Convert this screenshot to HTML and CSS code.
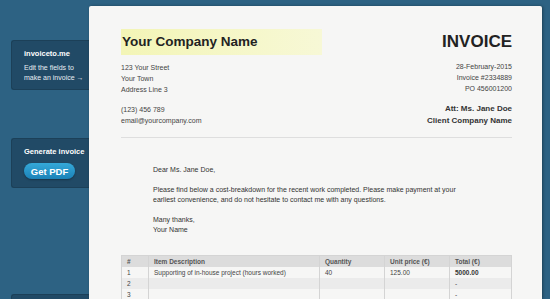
FILE: index.html
```html
<!DOCTYPE html>
<html lang="en">
<head>
    <meta charset="UTF-8">
    <title>invoiceto.me</title>
    <link rel="stylesheet" href="styles.css">
</head>
<body>
    <div class="layout">
        <div class="sidebar">
            <div class="side-box intro">
                <div class="brand">invoiceto.me</div>
                <p>Edit the fields to<br>make an invoice &rarr;</p>
            </div>
            <div class="side-box generate">
                <div class="brand">Generate invoice</div>
                <button class="pdf-btn">Get PDF</button>
            </div>
            <div class="side-box more"></div>
        </div>

        <div class="paper">
            <div class="head">
                <div class="from">
                    <div class="company">Your Company Name</div>
                    <p>123 Your Street<br>Your Town<br>Address Line 3</p>
                    <p>(123) 456 789<br>email@yourcompany.com</p>
                </div>
                <div class="meta">
                    <h1>INVOICE</h1>
                    <p>28-February-2015<br>Invoice #2334889<br>PO 456001200</p>
                    <p class="client">Att: Ms. Jane Doe<br>Client Company Name</p>
                </div>
            </div>

            <hr class="rule">

            <div class="letter">
                <p>Dear Ms. Jane Doe,</p>
                <p>Please find below a cost-breakdown for the recent work completed. Please make payment at your<br>earliest convenience, and do not hesitate to contact me with any questions.</p>
                <p>Many thanks,<br>Your Name</p>
            </div>

            <table class="items">
                <thead>
                    <tr>
                        <th class="c-num">#</th>
                        <th class="c-desc">Item Description</th>
                        <th class="c-qty">Quantity</th>
                        <th class="c-price">Unit price (&euro;)</th>
                        <th>Total (&euro;)</th>
                    </tr>
                </thead>
                <tbody>
                    <tr>
                        <td>1</td>
                        <td>Supporting of in-house project (hours worked)</td>
                        <td>40</td>
                        <td>125.00</td>
                        <td class="total">5000.00</td>
                    </tr>
                    <tr>
                        <td>2</td><td></td><td></td><td></td><td>-</td>
                    </tr>
                    <tr>
                        <td>3</td><td></td><td></td><td></td><td>-</td>
                    </tr>
                </tbody>
            </table>
        </div>
    </div>
</body>
</html>
```

FILE: styles.css
```css
* {
    margin: 0;
    padding: 0;
    box-sizing: border-box;
}

body {
    font-family: 'Liberation Sans', Arial, sans-serif;
    background: #2d6283;
    color: #333;
    overflow: hidden;
}

.layout {
    display: flex;
    height: 299px;
    overflow: hidden;
}

/* left column */
.sidebar {
    width: 89px;
    padding: 40px 0 0 11px;
    display: flex;
    flex-direction: column;
    gap: 48px;
    flex-shrink: 0;
}

.side-box {
    background: #214a66;
    border: 1px solid #1c4058;
    border-right: none;
    border-radius: 3px 0 0 3px;
    height: 50px;
    padding: 8px 0 0 12px;
    color: #fff;
    flex-shrink: 0;
}

.side-box.more {
    margin-top: 58px;
}

.brand {
    font-size: 7.5px;
    font-weight: bold;
    line-height: 10px;
}

.side-box p {
    font-size: 7px;
    line-height: 10px;
    margin-top: 4px;
    color: #e8eef3;
}

.pdf-btn {
    display: block;
    margin-top: 6px;
    width: 51px;
    height: 16px;
    border: none;
    border-radius: 8px;
    background: linear-gradient(#35a9d9, #1b82b8);
    color: #fff;
    font-family: inherit;
    font-weight: bold;
    font-size: 9.5px;
    box-shadow: 0 1px 2px rgba(0, 0, 0, 0.3);
}

/* invoice sheet */
.paper {
    margin-top: 6px;
    width: 453px;
    flex-shrink: 0;
    background: #f6f6f5;
    box-shadow: 1px 0 3px rgba(0, 0, 0, 0.35);
    border-radius: 2px 2px 0 0;
    padding: 23px 30px 0 32px;
}

.head {
    display: flex;
    justify-content: space-between;
}

.company {
    width: 201px;
    height: 26px;
    background: linear-gradient(90deg, #f3f5b6, #f7f8d6);
    font-size: 13.5px;
    font-weight: bold;
    color: #222;
    line-height: 26px;
    padding-left: 1px;
}

.from p,
.meta p {
    font-size: 7px;
    line-height: 11px;
    color: #444;
}

.from p {
    margin-top: 7px;
}

.from p + p {
    margin-top: 9px;
}

.meta {
    text-align: right;
}

.meta h1 {
    font-size: 17px;
    color: #222;
    line-height: 20px;
    margin-top: 3px;
}

.meta h1 + p {
    margin-top: 9px;
}

.meta .client {
    margin-top: 9px;
    font-weight: bold;
    font-size: 8px;
    line-height: 11.5px;
    color: #333;
}

.rule {
    border: none;
    border-top: 1px solid #dedede;
    margin-top: 11px;
}

.letter {
    padding: 27px 0 0 32px;
    font-size: 7px;
    line-height: 10.5px;
    color: #333;
}

.letter p + p {
    margin-top: 9px;
}

.items {
    margin-top: 19px;
    width: 100%;
    border-collapse: collapse;
    font-size: 6.5px;
    color: #444;
    border: 1px solid #d4d4d4;
}

.items th,
.items td {
    padding: 0 0 0 5px;
    text-align: left;
    border-left: 1px solid #d4d4d4;
    line-height: 11px;
}

.items th {
    background: #dcdcdc;
    font-weight: bold;
    color: #555;
}

.items tbody tr:nth-child(2) td {
    background: #ebebeb;
}

.items .total {
    font-weight: bold;
    color: #333;
}

.c-num { width: 27px; }
.c-desc { width: 171px; }
.c-qty { width: 65px; }
.c-price { width: 65px; }
```
